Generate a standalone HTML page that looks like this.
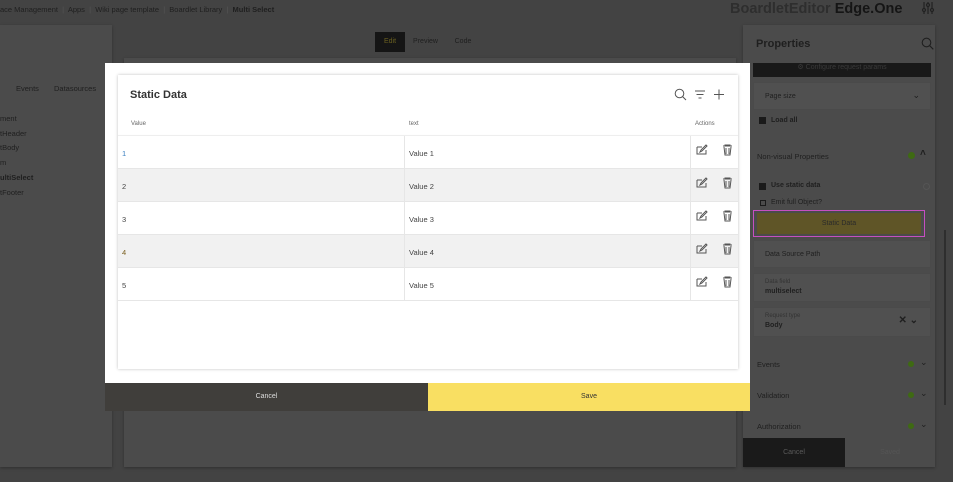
<!DOCTYPE html>
<html><head><style>
*{box-sizing:border-box;margin:0;padding:0}
body{width:953px;height:482px;overflow:hidden;background:#434343;font-family:"Liberation Sans",sans-serif;position:relative;font-size:8px;color:#222}
.a{position:absolute}
.panel{background:#4b4b4b;box-shadow:0 1px 3px rgba(0,0,0,.3)}
.row{position:absolute;left:0;width:620px;height:33px;border-bottom:1px solid #e6e6e6}
.row span{position:absolute;top:13px;font-size:7.5px;color:#444}
.box{position:absolute;left:753px;width:178px;background:#505050;border:1px solid #4a4a4a}
.t{color:#1f1f1f}
</style></head><body>
<div class="a t" style="left:0;top:5px;font-size:7.5px;white-space:nowrap">ace Management &nbsp;<span style="color:#555">|</span>&nbsp; Apps &nbsp;<span style="color:#555">|</span>&nbsp; Wiki page template &nbsp;<span style="color:#555">|</span>&nbsp; Boardlet Library &nbsp;<span style="color:#555">|</span>&nbsp; <b>Multi Select</b></div>
<div class="a" style="left:730px;top:1px;font-size:14.5px;font-weight:bold;color:#2e2e2e;white-space:nowrap">BoardletEditor <span style="color:#151515">Edge.One</span></div>
<svg class="a" style="left:921px;top:1px" width="14" height="14" viewBox="0 0 14 14" stroke="#222" fill="none" stroke-width="1.2"><path d="M3 1v12M7 1v12M11 1v12"/><circle cx="3" cy="9" r="1.5" fill="#434343"/><circle cx="7" cy="4" r="1.5" fill="#434343"/><circle cx="11" cy="9" r="1.5" fill="#434343"/></svg>

<div class="a panel" style="left:0;top:25px;width:112px;height:442px"></div>
<div class="a t" style="left:16px;top:84px;font-size:7.5px">Events</div>
<div class="a t" style="left:54px;top:84px;font-size:7.5px">Datasources</div>
<div class="a t" style="left:0;top:112px;font-size:7.5px;line-height:14.7px">ment<br>tHeader<br>tBody<br>m<br><b>ultiSelect</b><br>tFooter</div>
<div class="a panel" style="left:124px;top:58px;width:612px;height:409px"></div>
<div class="a" style="left:375px;top:32px;width:30px;height:20px;background:#151515;color:#6a6020;font-size:7px;text-align:center;line-height:20px">Edit</div>
<div class="a t" style="left:405px;top:32px;width:41px;height:20px;font-size:7px;text-align:center;line-height:20px">Preview</div>
<div class="a t" style="left:446px;top:32px;width:34px;height:20px;font-size:7px;text-align:center;line-height:20px">Code</div>

<div class="a panel" style="left:743px;top:25px;width:192px;height:442px"></div>
<div class="a t" style="left:756px;top:38px;font-size:11px;font-weight:bold">Properties</div>
<svg class="a" style="left:921px;top:37px" width="13" height="13" viewBox="0 0 13 13" fill="none" stroke="#1f1f1f" stroke-width="1.1"><circle cx="5.5" cy="5.5" r="4.3"/><path d="M8.7 8.7l3.6 3.6"/></svg>
<div class="a" style="left:753px;top:63px;width:178px;height:14px;background:#191919;color:#3a3a3a;font-size:7px;text-align:center;line-height:10px">⚙ Configure request params</div>
<div class="box" style="top:82px;height:28px"><span class="a t" style="left:11px;top:10px;font-size:7px">Page size</span><span class="a t" style="right:10px;top:7px;font-size:9px">⌄</span></div>
<div class="a" style="left:759px;top:117px;width:7px;height:7px;background:#1a1a1a"></div>
<div class="a t" style="left:771px;top:117px;font-size:7px;font-weight:bold">Load all</div>
<div class="a t" style="left:757px;top:152px;font-size:7.5px">Non-visual Properties</div>
<div class="a" style="left:908px;top:152px;width:7px;height:7px;border-radius:50%;background:#3e6a12"></div>
<div class="a t" style="left:920px;top:148px;font-size:10px;font-weight:bold">˄</div>
<div class="a" style="left:759px;top:183px;width:7px;height:7px;background:#1a1a1a"></div>
<div class="a t" style="left:771px;top:182px;font-size:7px;font-weight:bold">Use static data</div>
<div class="a" style="left:923px;top:183px;width:7px;height:7px;border-radius:50%;border:1px solid #555"></div>
<div class="a" style="left:760px;top:200px;width:6px;height:6px;border:1px solid #1a1a1a"></div>
<div class="a t" style="left:771px;top:199px;font-size:7px">Emit full Object?</div>
<div class="a" style="left:753px;top:210px;width:172px;height:27px;border:1px solid #c74fc0;padding:2px 3px"><div style="background:#5f5527;height:21px;color:#2a2a2a;font-size:7px;text-align:center;line-height:21px">Static Data</div></div>
<div class="a" style="left:743px;top:221px;width:8px;height:5px;color:#e24fd7;font-size:7px;line-height:5px">◂</div>
<div class="box" style="top:240px;height:28px"><span class="a t" style="left:11px;top:10px;font-size:7px">Data Source Path</span></div>
<div class="box" style="top:273px;height:29px"><span class="a" style="left:11px;top:5px;font-size:6px;color:#333">Data field</span><span class="a t" style="left:11px;top:14px;font-size:7px;font-weight:bold">multiselect</span></div>
<div class="box" style="top:307px;height:30px"><span class="a" style="left:11px;top:5px;font-size:6px;color:#333">Request type</span><span class="a t" style="left:11px;top:14px;font-size:7px;font-weight:bold">Body</span><span class="a t" style="right:12px;top:7px;font-size:10px;font-weight:bold">✕ ⌄</span></div>
<div class="a t" style="left:757px;top:360px;font-size:7.5px">Events</div>
<div class="a t" style="left:757px;top:391px;font-size:7.5px">Validation</div>
<div class="a t" style="left:757px;top:422px;font-size:7.5px">Authorization</div>
<div class="a" style="left:908px;top:361px;width:6px;height:6px;border-radius:50%;background:#3e6a12"></div>
<div class="a" style="left:908px;top:392px;width:6px;height:6px;border-radius:50%;background:#3e6a12"></div>
<div class="a" style="left:908px;top:423px;width:6px;height:6px;border-radius:50%;background:#3e6a12"></div>
<div class="a t" style="left:920px;top:357px;font-size:9px">⌄</div>
<div class="a t" style="left:920px;top:388px;font-size:9px">⌄</div>
<div class="a t" style="left:920px;top:419px;font-size:9px">⌄</div>
<div class="a" style="left:743px;top:438px;width:102px;height:29px;background:#1a1a1a;color:#5a5a5a;font-size:7px;text-align:center;line-height:29px">Cancel</div>
<div class="a" style="left:845px;top:438px;width:90px;height:29px;color:#555;font-size:7px;text-align:center;line-height:29px">Saved</div>
<div class="a" style="left:944px;top:230px;width:2px;height:175px;background:#2e2e2e"></div>

<!-- modal -->
<div class="a" style="left:105px;top:63px;width:645px;height:320px;background:#fff"></div>
<div class="a" style="left:118px;top:75px;width:620px;height:294px;background:#fff;box-shadow:0 0 3px rgba(0,0,0,.25)">
<div class="a" style="left:12px;top:14px;font-size:11px;font-weight:bold;color:#333">Static Data</div>
<svg class="a" style="left:556px;top:13px" width="50" height="13" viewBox="0 0 50 13" fill="none" stroke="#555" stroke-width="1"><circle cx="5.5" cy="5.5" r="4.3"/><path d="M8.6 8.6l3.4 3.4M21 3h10M22.5 6.5h7M24.5 10h3M45 1.5v10M40 6.5h10"/></svg>
<div class="a" style="left:13px;top:46px;font-size:6px;color:#666">Value</div>
<div class="a" style="left:291px;top:46px;font-size:6px;color:#666">text</div>
<div class="a" style="left:577px;top:46px;font-size:6px;color:#666">Actions</div>
<div class="a" style="left:0;top:60px;width:620px;height:1px;background:#eee;box-shadow:0 1px 2px rgba(0,0,0,.08)"></div>
<div class="row" style="top:61px;background:#fff"><span style="left:4px;color:#3a7fc0">1</span><span style="left:291px">Value 1</span></div>
<div class="row" style="top:94px;background:#f1f1f1"><span style="left:4px">2</span><span style="left:291px">Value 2</span></div>
<div class="row" style="top:127px;background:#fff"><span style="left:4px">3</span><span style="left:291px">Value 3</span></div>
<div class="row" style="top:160px;background:#f1f1f1"><span style="left:4px;color:#7a6020">4</span><span style="left:291px">Value 4</span></div>
<div class="row" style="top:193px;background:#fff"><span style="left:4px">5</span><span style="left:291px">Value 5</span></div>
<div class="a" style="left:286px;top:61px;width:1px;height:164px;background:#e6e6e6"></div>
<div class="a" style="left:572px;top:61px;width:1px;height:164px;background:#e6e6e6"></div>
</div>
<svg class="a" style="left:696px;top:144px" width="42" height="150" viewBox="0 0 42 150" fill="none" stroke="#555" stroke-width="1">
<g id="ic"><path d="M1 3h5M1 3v7h9V6"/><path d="M4 8l1-2 5-5 1 1-5 5z"/><path d="M27 2h9M29 2v-1h5v1M28 3l1 8h5l1-8M30 4v6M33 4v6"/></g>
<use href="#ic" y="33"/><use href="#ic" y="66"/><use href="#ic" y="99"/><use href="#ic" y="132"/>
</svg>
<div class="a" style="left:105px;top:383px;width:323px;height:28px;background:#403e3b;color:#ddd;font-size:7px;text-align:center;line-height:28px">Cancel</div>
<div class="a" style="left:428px;top:383px;width:322px;height:28px;background:#f9df62;color:#333;font-size:7px;text-align:center;line-height:28px">Save</div>
</body></html>
